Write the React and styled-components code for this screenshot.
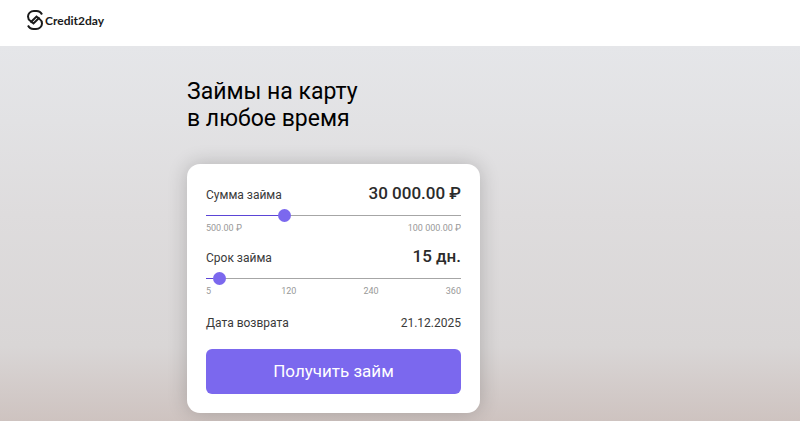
import React, { useState } from "react";
import styled, { createGlobalStyle } from "styled-components";

const START_DATE = Date.UTC(2025, 11, 6);
const DAY = 24 * 60 * 60 * 1000;

const formatMoney = (value) => {
  const whole = String(value).replace(/\B(?=(\d{3})+$)/g, "\u00a0");
  return `${whole}.00 ₽`;
};

const formatDate = (days) => {
  const date = new Date(START_DATE + days * DAY);
  const dd = String(date.getUTCDate()).padStart(2, "0");
  const mm = String(date.getUTCMonth() + 1).padStart(2, "0");
  return `${dd}.${mm}.${date.getUTCFullYear()}`;
};

const RangeField = ({ id, label, display, min, max, step, value, onChange, ticks }) => {
  const percent = ((value - min) / (max - min)) * 100;

  return (
    <Field>
      <FieldHead>
        <Label htmlFor={id}>{label}</Label>
        <Value htmlFor={id}>{display}</Value>
      </FieldHead>
      <Range
        id={id}
        type="range"
        min={min}
        max={max}
        step={step}
        value={value}
        onChange={(e) => onChange(Number(e.target.value))}
        style={{ "--fill": `${percent}%` }}
      />
      <Ticks>
        {ticks.map((tick) => (
          <Tick key={tick}>{tick}</Tick>
        ))}
      </Ticks>
    </Field>
  );
};

const App = () => {
  const [amount, setAmount] = useState(30000);
  const [days, setDays] = useState(15);

  return (
    <Page>
      <GlobalStyle />
      <Header>
        <Logo href="/">
          <LogoMark viewBox="0 0 32 40" aria-hidden="true">
            <path d="M30 9C28 5 24 2 19 2h-5C7 2 2 7 2 13c0 4 2 7 5 9l6 5 12-12" />
            <path d="M2 31c2 4 6 7 11 7h5c7 0 12-5 12-11 0-4-2-7-5-9l-6-5L7 25" />
          </LogoMark>
          Credit2day
        </Logo>
      </Header>
      <Hero>
        <Container>
          <Title>
            Займы на карту
            <br />в любое время
          </Title>
          <Card onSubmit={(e) => e.preventDefault()}>
            <RangeField
              id="amount"
              label="Сумма займа"
              display={formatMoney(amount)}
              min={500}
              max={100000}
              step={500}
              value={amount}
              onChange={setAmount}
              ticks={["500.00 ₽", "100 000.00 ₽"]}
            />
            <RangeField
              id="days"
              label="Срок займа"
              display={`${days} дн.`}
              min={5}
              max={360}
              step={1}
              value={days}
              onChange={setDays}
              ticks={["5", "120", "240", "360"]}
            />
            <Summary>
              <span>Дата возврата</span>
              <span>{formatDate(days)}</span>
            </Summary>
            <Submit type="submit">Получить займ</Submit>
          </Card>
        </Container>
      </Hero>
    </Page>
  );
};

const GlobalStyle = createGlobalStyle`
  * {
    box-sizing: border-box;
  }

  body {
    margin: 0;
    font-family: Roboto, "Liberation Sans", sans-serif;
    color: #3a3a3a;
  }
`;

const Page = styled.div`
  min-height: 100vh;
  display: flex;
  flex-direction: column;
`;

const Header = styled.header`
  display: flex;
  padding: 10px 27px 16px;
  background-color: #ffffff;
`;

const Logo = styled.a`
  display: flex;
  align-items: center;
  gap: 2px;
  height: 20px;
  font-family: Lato, sans-serif;
  font-size: 12px;
  font-weight: 700;
  color: #1a1a1a;
  text-decoration: none;
`;

const LogoMark = styled.svg`
  width: 16px;
  height: 20px;
  fill: none;
  stroke: currentColor;
  stroke-width: 4;
`;

const Hero = styled.main`
  flex: 1;
  padding: 32px 20px 8px;
  background: linear-gradient(
    #e5e6e9 0%,
    #e2e2e4 20%,
    #dedcdd 45%,
    #d9d6d6 80%,
    #cec3c0 100%
  );
`;

const Container = styled.div`
  max-width: 426px;
  margin: 0 auto;
`;

const Title = styled.h1`
  margin: 0 0 32px;
  font-size: 23px;
  font-weight: 400;
  line-height: 27px;
  color: #000000;
`;

const Card = styled.form`
  max-width: 293px;
  padding: 18px 19px 19px;
  border-radius: 13px;
  background-color: #ffffff;
  box-shadow: 0 0 20px rgba(0, 0, 0, 0.2);
`;

const Field = styled.div`
  margin-bottom: 11px;
`;

const FieldHead = styled.div`
  display: flex;
  justify-content: space-between;
  align-items: baseline;
  margin-bottom: 3px;
  line-height: 22px;
`;

const Label = styled.label`
  font-size: 12px;
`;

const Value = styled.output`
  font-size: 17px;
  font-weight: 500;
  color: #2b2b2b;
`;

const Range = styled.input`
  appearance: none;
  display: block;
  width: 100%;
  height: 13px;
  margin: 0;
  background: transparent;
  cursor: pointer;

  &::-webkit-slider-runnable-track {
    height: 1px;
    background: linear-gradient(
      to right,
      #5b45d6 var(--fill),
      #a6a6a6 var(--fill)
    );
  }

  &::-webkit-slider-thumb {
    appearance: none;
    width: 13px;
    height: 13px;
    margin-top: -6px;
    border-radius: 50%;
    background-color: #7b68ee;
  }
`;

const Ticks = styled.div`
  display: flex;
  justify-content: space-between;
  font-size: 9px;
  line-height: 12px;
  color: #999999;
`;

const Tick = styled.span`
  min-width: 8px;
`;

const Summary = styled.div`
  display: flex;
  justify-content: space-between;
  margin: 18px 0;
  font-size: 12px;
  line-height: 16px;
`;

const Submit = styled.button`
  display: block;
  width: 100%;
  height: 45px;
  padding: 0 0 2px;
  border: none;
  border-radius: 6px;
  background-color: #7b68ee;
  color: #ffffff;
  font-family: inherit;
  font-size: 17px;
  cursor: pointer;
`;

export default App;
